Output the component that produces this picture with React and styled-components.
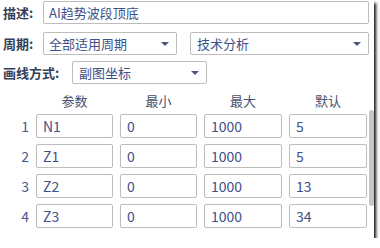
import styled, { createGlobalStyle } from "styled-components";

const GlobalStyle = createGlobalStyle`
  html, body {
    margin: 0;
    padding: 0;
    background: #ffffff;
  }
  body {
    font-family: "Noto Sans CJK SC", "Liberation Sans", sans-serif;
  }
`;

const Panel = styled.div`
  position: relative;
  width: 374px;
  height: 238px;
  background: #ffffff;
  box-shadow: 2px 3px 3px rgba(0, 0, 0, 0.95);
  overflow: hidden;
`;

const Form = styled.div`
  display: flex;
  flex-direction: column;
  padding: 1px 0 0 3px;
`;

const Row = styled.div`
  display: flex;
  align-items: center;
  height: 23px;
  margin-bottom: ${(p) => p.$gap || 0}px;
`;

const Label = styled.div`
  width: ${(p) => p.$width}px;
  flex: none;
  font-size: 13px;
  font-weight: bold;
  color: #343e58;
  white-space: nowrap;
`;

const Box = styled.div`
  box-sizing: border-box;
  position: relative;
  display: flex;
  align-items: center;
  width: ${(p) => p.$width}px;
  height: 23px;
  margin-left: ${(p) => p.$ml || 0}px;
  padding-left: ${(p) => p.$pl || 5}px;
  border: 1px solid #bdbdbd;
  border-radius: 2px;
  font-size: 13px;
  color: #3e5088;
  white-space: nowrap;
  flex: none;
`;

const Arrow = styled.span`
  position: absolute;
  right: 7px;
  top: 50%;
  margin-top: -2px;
  width: 0;
  height: 0;
  border-left: 4px solid transparent;
  border-right: 4px solid transparent;
  border-top: 4px solid #47597a;
`;

const Table = styled.div`
  display: flex;
  flex-direction: column;
  padding-top: 2px;
`;

const HeadRow = styled.div`
  display: grid;
  grid-template-columns: 26px 77px 77px 78px 78px;
  column-gap: 7px;
  height: 28px;
  align-items: center;
  font-size: 13px;
  color: #48516c;
`;

const HeadCell = styled.div`
  text-align: center;
`;

const ParamRow = styled.div`
  display: grid;
  grid-template-columns: 26px 77px 77px 78px 78px;
  column-gap: 7px;
  height: 24px;
  margin-bottom: 6px;
  align-items: center;
`;

const Num = styled.div`
  text-align: right;
  font-size: 14px;
  color: #46598a;
`;

const Cell = styled.div`
  box-sizing: border-box;
  height: 24px;
  display: flex;
  align-items: center;
  padding-left: 6px;
  border: 1px solid #bdbdbd;
  border-radius: 2px;
  font-size: 14px;
  color: #3e5088;
`;

const Thumb = styled.div`
  position: absolute;
  left: 369px;
  top: 110px;
  width: 5px;
  height: 96px;
  border-radius: 3px;
  background: #c6c6c6;
`;

const Watermark = styled.div`
  position: absolute;
  inset: 0;
  pointer-events: none;
  display: flex;
  flex-direction: column;
  padding-top: 3px;
  margin-left: -57px;
`;

const MarkLine = styled.div`
  height: 28.5px;
  line-height: 28.5px;
  font-size: 20px;
  color: rgba(0, 0, 0, 0.025);
  white-space: nowrap;
`;

const params = [
  ["N1", "0", "1000", "5"],
  ["Z1", "0", "1000", "5"],
  ["Z2", "0", "1000", "13"],
  ["Z3", "0", "1000", "34"],
];

const mark = "分析家公式网www.fxjgsw.Com ";

export default function App() {
  return (
    <>
      <GlobalStyle />
      <Panel>
        <Form>
          <Row $gap={8}>
            <Label $width={40}>描述:</Label>
            <Box $width={326}>AI趋势波段顶底</Box>
          </Row>
          <Row $gap={6}>
            <Label $width={40}>周期:</Label>
            <Box $width={134}>
              全部适用周期
              <Arrow />
            </Box>
            <Box $width={179} $ml={13} $pl={6}>
              技术分析
              <Arrow />
            </Box>
          </Row>
          <Row>
            <Label $width={69}>画线方式:</Label>
            <Box $width={135} $pl={6}>
              副图坐标
              <Arrow />
            </Box>
          </Row>
          <Table>
            <HeadRow>
              <div />
              <HeadCell>参数</HeadCell>
              <HeadCell>最小</HeadCell>
              <HeadCell>最大</HeadCell>
              <HeadCell>默认</HeadCell>
            </HeadRow>
            {params.map((p, i) => (
              <ParamRow key={i}>
                <Num>{i + 1}</Num>
                {p.map((v, j) => (
                  <Cell key={j}>{v}</Cell>
                ))}
              </ParamRow>
            ))}
          </Table>
        </Form>
        <Thumb />
        <Watermark>
          {Array.from({ length: 9 }).map((_, i) => (
            <MarkLine key={i}>{mark + mark}</MarkLine>
          ))}
        </Watermark>
      </Panel>
    </>
  );
}
